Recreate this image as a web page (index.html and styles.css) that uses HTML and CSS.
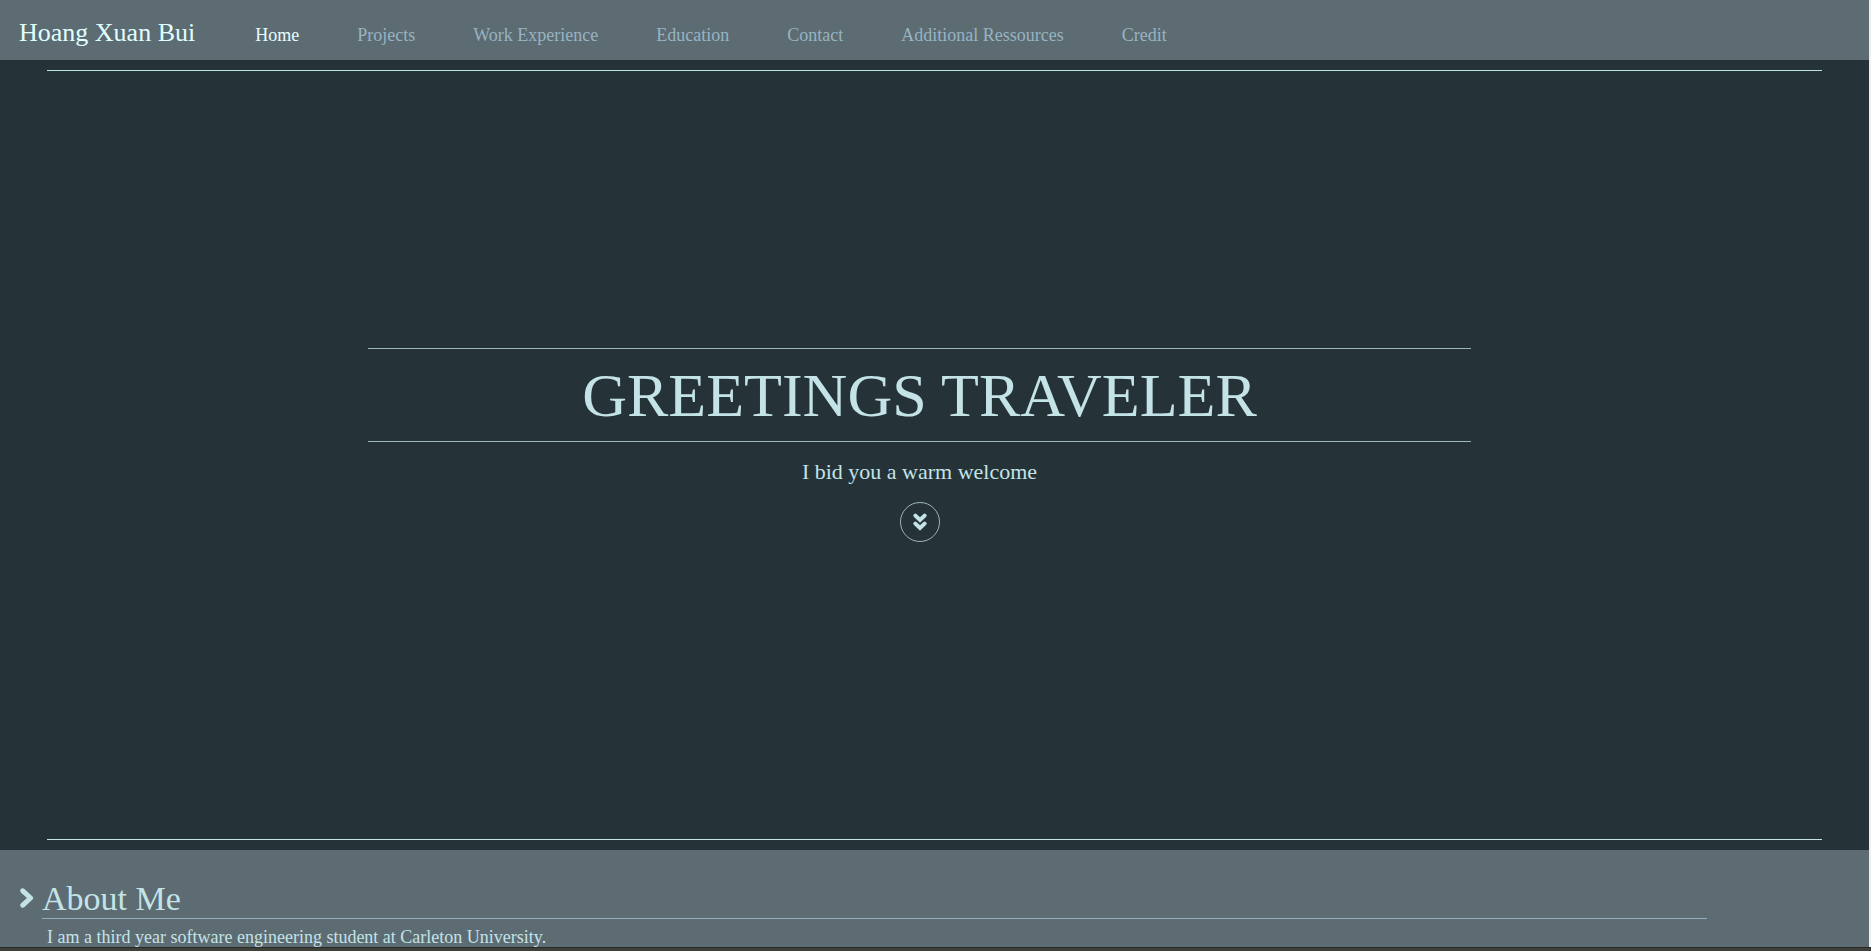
FILE: index.html
```html
<!DOCTYPE html>
<html lang="en">
<head>
<meta charset="utf-8">
<title>Hoang Xuan Bui</title>
<link rel="stylesheet" href="styles.css">
</head>
<body>
<div class="page">
  <header class="navbar">
    <a class="brand" href="#">Hoang Xuan Bui</a>
    <nav class="nav">
      <a class="nav-link active" href="#">Home</a>
      <a class="nav-link" href="#">Projects</a>
      <a class="nav-link" href="#">Work Experience</a>
      <a class="nav-link" href="#">Education</a>
      <a class="nav-link" href="#">Contact</a>
      <a class="nav-link" href="#">Additional Ressources</a>
      <a class="nav-link" href="#">Credit</a>
    </nav>
  </header>
  <main class="main">
    <section class="hero">
      <div class="greeting">
        <h1 class="title">GREETINGS TRAVELER</h1>
        <p class="subtitle">I bid you a warm welcome</p>
        <a class="scroll" href="#about" aria-label="Scroll to About Me">
          <svg class="scroll-icon" viewBox="0 0 14 18" aria-hidden="true"><path d="M2.4 2.6 7 7 11.6 2.6M2.4 10.6 7 15 11.6 10.6"/></svg>
        </a>
      </div>
    </section>
    <section class="about" id="about">
      <svg class="chevron" viewBox="0 0 14 20" aria-hidden="true"><path d="M2.8 2.8 10.6 10 2.8 17.2"/></svg>
      <div class="about-body">
        <h2 class="about-title">About Me</h2>
        <p class="about-text">I am a third year software engineering student at Carleton University.</p>
      </div>
    </section>
  </main>
</div>
<div class="bottom-edge"></div>
</body>
</html>
```
FILE: styles.css
```css
* {
  box-sizing: border-box;
}

body {
  display: flex;
  flex-direction: column;
  height: 100vh;
  margin: 0;
  overflow: hidden;
  background: #253238;
  color: #c4e3e6;
  font-family: Georgia, "Liberation Serif", serif;
  font-size: 18px;
}

h1, h2, p {
  margin: 0;
  font-weight: 400;
}

a {
  text-decoration: none;
}

.page {
  display: flex;
  flex: 1;
  flex-direction: column;
  min-height: 0;
  overflow: hidden;
  border-right: 2px solid #f0f0f0;
}

.navbar {
  display: flex;
  flex: none;
  align-items: baseline;
  gap: 60px;
  height: 60px;
  padding: 18px 19px 0;
  background: #5d6b73;
}

.brand {
  color: #e0ffff;
  font-size: 26px;
  line-height: 30px;
}

.nav {
  display: flex;
  gap: 58px;
}

.nav-link {
  color: #96b4c2;
}

.nav-link.active {
  color: #e8ffff;
}

.main {
  display: flex;
  flex: 1;
  flex-direction: column;
  min-height: 0;
}

.hero {
  display: flex;
  flex: 1;
  flex-direction: column;
  justify-content: center;
  margin: 10px 47px;
  padding: 0 30px 20px 0;
  border-top: 1px solid #b9e2e0;
  border-bottom: 1px solid #c4e3e6;
}

.greeting {
  display: flex;
  flex-direction: column;
  align-items: center;
}

.title {
  width: 59vw;
  padding: 10px 0;
  border-top: 1px solid #9db5bd;
  border-bottom: 1px solid #9db5bd;
  font-size: 62px;
  line-height: 72px;
  text-align: center;
}

.subtitle {
  margin: 16px 0;
  font-size: 22px;
  line-height: 28px;
}

.scroll {
  display: grid;
  place-items: center;
  width: 40px;
  height: 40px;
  border: 1px solid #9db5bd;
  border-radius: 50%;
}

.scroll-icon {
  width: 14px;
  height: 18px;
}

.scroll-icon path,
.chevron path {
  fill: none;
  stroke: #c4e3e6;
  stroke-linejoin: miter;
  stroke-linecap: round;
  stroke-width: 4;
}

.about {
  display: flex;
  flex: none;
  gap: 8px;
  height: 97px;
  padding: 28px 162px 0 20px;
  background: #5d6b73;
}

.chevron {
  flex: none;
  width: 14px;
  height: 20px;
  margin-top: 10px;
}

.chevron path {
  stroke-linejoin: round;
  stroke-width: 5;
}

.about-body {
  flex: 1;
}

.about-title {
  padding-top: 2px;
  border-bottom: 1px solid #90b0be;
  font-size: 34px;
  line-height: 38px;
}

.about-text {
  padding: 8px 5px 0;
  line-height: 20px;
}

.bottom-edge {
  flex: none;
  height: 4px;
  border-top: 1px solid #272a28;
  background: #40403a;
}
```
